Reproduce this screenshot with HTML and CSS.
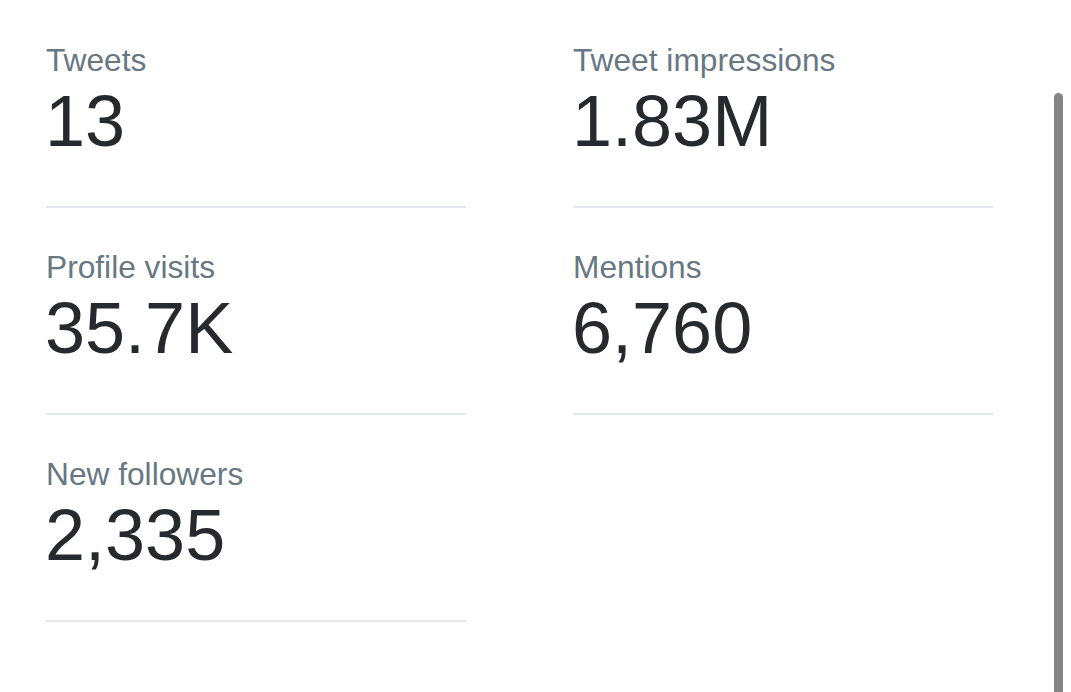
FILE: index.html
```html
<!DOCTYPE html>
<html lang="en">
<head>
<meta charset="utf-8">
<title>Analytics summary</title>
<link rel="stylesheet" href="styles.css">
</head>
<body>
<main class="stats">
  <div class="stat">
    <div class="stat-label">Tweets</div>
    <div class="stat-value">13</div>
  </div>
  <div class="stat">
    <div class="stat-label">Tweet impressions</div>
    <div class="stat-value">1.83M</div>
  </div>
  <div class="stat">
    <div class="stat-label">Profile visits</div>
    <div class="stat-value">35.7K</div>
  </div>
  <div class="stat">
    <div class="stat-label">Mentions</div>
    <div class="stat-value">6,760</div>
  </div>
  <div class="stat">
    <div class="stat-label">New followers</div>
    <div class="stat-value">2,335</div>
  </div>
</main>
<div class="scrollbar"></div>
</body>
</html>
```

FILE: styles.css
```css
html, body {
  margin: 0;
  padding: 0;
  background: #ffffff;
  height: 100%;
  overflow: hidden;
}

body {
  font-family: "Liberation Sans", Arial, Helvetica, sans-serif;
  position: relative;
}

.stats {
  display: grid;
  grid-template-columns: 420px 420px;
  column-gap: 107px;
  padding: 1px 0 0 46px;
}

.stat {
  padding: 41px 0 45px 0;
  border-bottom: 2px solid #e4e7eb;
}

.stat-label {
  font-size: 31.7px;
  line-height: 36px;
  color: #687782;
}

.stat-value {
  margin: 4px 0 0 -1px;
  font-size: 72px;
  line-height: 79px;
  color: #262a2f;
}

.scrollbar {
  position: absolute;
  left: 1054px;
  top: 93px;
  width: 9px;
  height: 620px;
  background: #858585;
  border-radius: 5px 5px 0 0;
}
```
